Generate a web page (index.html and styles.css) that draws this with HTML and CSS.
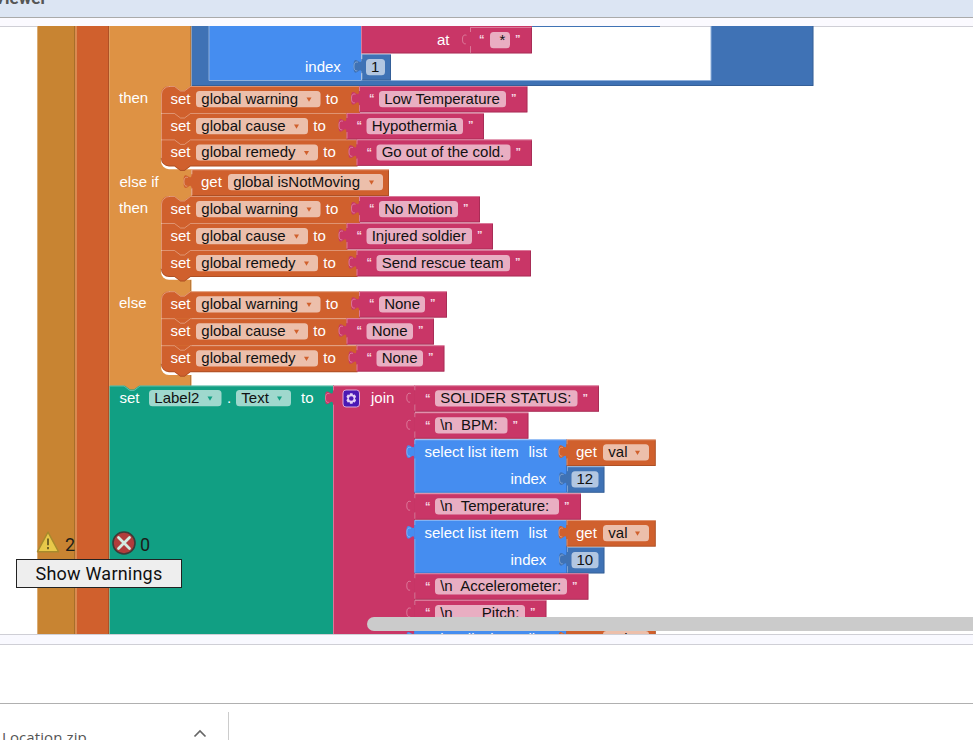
FILE: index.html
```html
<!DOCTYPE html>
<html lang="en">
<head>
<meta charset="utf-8">
<title>Viewer</title>
<link rel="stylesheet" href="styles.css">
</head>
<body>
<header class="viewer-header"><span class="viewer-title">Viewer</span></header>
<main class="workspace">
  <svg class="canvas" viewBox="0 26 973 608" width="973" height="608" id="canvas"></svg>
  <div class="warnings">
    <div class="counts">
      <svg class="warn-icon" viewBox="0 0 24 22" width="24" height="22"><path d="M12 1.2 22.5 20.7H1.5Z" fill="#e8c84a" stroke="#a88a2c" stroke-width="1.4" stroke-linejoin="round"/><path d="M12 7.5v6.8M12 16v2.3" stroke="#6b5a20" stroke-width="1.8"/></svg>
      <span class="count">2</span>
      <svg class="error-icon" viewBox="0 0 24 24" width="24" height="24"><circle cx="12" cy="12" r="11" fill="#b13c3c" stroke="#3c3a38" stroke-width="1.6"/><path d="m6.5 6.500 11 11M17.500 6.500l-11 11" stroke="#d4ebe2" stroke-width="2.800" stroke-linecap="round"/></svg>
      <span class="count">0</span>
    </div>
    <button class="toggle">Show Warnings</button>
  </div>
  <div class="scrollbar"></div>
</main>
<div class="gutter"></div>
<section class="panel"></section>
<footer class="downloads">
  <div class="download">
    <span>Location.zip</span>
    <svg class="chevron" viewBox="0 0 14 9" width="14" height="9"><path d="m1.500 7.500 5.500-5.500 5.500 5.500" fill="none" stroke="#666" stroke-width="1.700"/></svg>
  </div>
</footer>
<script src="blocks.js"></script>
</body>
</html>
```
FILE: styles.css
```css
* { box-sizing: border-box; }
body { margin: 0; height: 740px; overflow: hidden; background: #fff; display: flex; flex-direction: column; font-family: Roboto, sans-serif; }
.viewer-header { flex: 0 0 26px; display: flex; align-items: flex-start; overflow: hidden; background: linear-gradient(#dce5f3 0 17px, #aaa 17px 18px, #fbfaff 18px 26px); }
.viewer-title { margin: -16px 0 0 -6px; font-size: 17px; line-height: 28px; font-weight: 700; color: #555; }
.workspace { flex: 0 0 608px; position: relative; overflow: hidden; }
.canvas { display: block; }
.canvas text { font: 15px "Liberation Sans", sans-serif; fill: #fff; white-space: pre; }
.canvas text.value { fill: #111; }
.canvas text.quote { font-size: 11px; font-weight: 700; fill: #f6dbe5; }
.edge-light { fill: none; stroke: #fff; stroke-opacity: .33; }
.edge-dark { fill: none; stroke: #000; stroke-opacity: .16; }
.pill { fill: #fff; fill-opacity: .6; }
.warnings { position: absolute; left: 16px; top: 504px; width: 166px; color: #1c1c18; }
.counts { display: flex; align-items: flex-start; height: 29px; padding-left: 20px; font-size: 18px; line-height: 29px; }
.count { width: 12px; margin-left: 5px; }
.warn-icon { margin-top: 1px; }
.error-icon { margin-left: 35px; margin-right: -1px; margin-top: 1px; }
.toggle { display: block; width: 166px; height: 29px; padding: 0; border: 1.500px solid #222; border-radius: 0; background: #eee; color: #111; font: 18px/27px Roboto, sans-serif; letter-spacing: .22px; }
.scrollbar { position: absolute; left: 367px; right: -10px; top: 591px; height: 14px; border-radius: 7px; background: #cbcbcb; }
.gutter { flex: 0 0 11px; background: #f9f9ff; border-top: 1px solid #cfcfd6; border-bottom: 1px solid #cfcfd6; }
.panel { flex: 0 0 59px; border-bottom: 1px solid #b0b0b0; }
.downloads { flex: 1; padding-top: 8px; overflow: hidden; }
.download { display: flex; align-items: flex-start; justify-content: space-between; width: 229px; height: 40px; padding: 14px 21px 0 2px; border-right: 1px solid #ccc; color: #555; font: 15px/22px "Open Sans", sans-serif; letter-spacing: .1px; }
.chevron { margin-top: 3px; }
```
FILE: blocks.js
```js
const C = {
  event: '#c88432', proc: '#d0602d', control: '#de9244', variable: '#d0602d',
  text: '#c93667', math: '#3f72b5', list: '#458df0', component: '#119f83'
};
let out = '';
const rect = (x, y, w, h, fill) => { out += `<rect x="${x}" y="${y}" width="${w}" height="${h}" fill="${fill}"/>`; };
const edge = (d, kind) => { out += `<path class="edge-${kind}" d="${d}"/>`; };
const label = (x, y, s, cls = '') => { out += `<text class="${cls}" x="${x}" y="${y}">${s}</text>`; };

// Puzzle tab on the left side of a value block
function tab(x, y, fill) {
  out += `<path d="M${x + .5} ${y + 5}h-.5c0 9.500-8-7.500-8 7.300s8-2.300 8 7h.5z" fill="${fill}"/>`;
  edge(`M${x - 3.5} ${y + 8.2}c-2.200-.6-4 0-4 4.100 0 4 1.500 4.800 3.300 4.500`, 'light');
}
// Rectangular value block
function block(x, y, w, h, fill) {
  rect(x, y, w, h, fill);
  edge(`M${x + .5} ${y + h - 1}V${y + 19}M${x + .5} ${y + 5}V${y + .5}H${x + w}`, 'light');
  edge(`M${x + 1} ${y + h - .5}H${x + w - .5}V${y + 1}`, 'dark');
  tab(x, y, fill);
}
function pill(x, y, w) { out += `<rect class="pill" x="${x}" y="${y}" width="${w}" height="16.200" rx="3.500"/>`; }
function dropdown(x, base, w, s, fill) {
  pill(x, base - 13, w);
  label(x + 5.3, base, s, 'value');
  const a = x + w - 11.5;
  out += `<path d="M${a - 2.5} ${base - 6.500}h5l-2.500 4.300z" fill="${fill}"/>`;
}
function text(x, y, s, pw, width, bleed = 0) {
  const base = y + 18;
  block(x - bleed, y, width + bleed, 26.5, C.text);
  label(x + 10, base - 1.8, '“', 'quote');
  pill(x + 20, base - 13, pw);
  label(x + 25.2, base, s, 'value');
  label(x + 20 + pw + 5, base - 1.8, '”', 'quote');
}
function number(x, y, s, w) {
  block(x, y, w, 26.5, C.math);
  pill(x + 4.5, y + 5, w - 10.5);
  label(x + 9.5, y + 18, s, 'value');
}
// Variable setter; the last one of a stack has a rounded foot
function setter(y, name, pw, right, first, last) {
  const x = 161, h = 27, b = y + h, start = last ? b - 8 : b;
  const tl = first ? `M${x} ${start}V${y + 8}a8 8 0 0 1 8-8` : `M${x} ${start}V${y}`;
  const top = `${tl}H${x + 13.5}l6 4.500h4l6-4.500H${right}`;
  const foot = last ? `H${x + 29.5}l-6 4.500h-4l-6-4.500H${x + 8}a8 8 0 0 1-8-8` : `H${x}`;
  out += `<path d="${top}V${b}${foot}z" fill="${C.variable}"/>`;
  edge(`M${x + .5} ${start}V${y + (first ? 8 : 0)}${first ? 'a8 8 0 0 1 8-7.500' : ''}M${x + (first ? 8 : 0)} ${y + .5}H${x + 13.5}l6 4.500h4l6-4.500H${right}`, 'light');
  if (last) edge(`M${right} ${b - .5}${foot}`, 'dark');
  label(170.5, y + 18, 'set');
  dropdown(196, y + 18, pw, name, C.variable);
  label(196 + pw + 5.3, y + 18, 'to');
}
function stack(ys, values) {
  const rows = [['global warning', 124.5, 359], ['global cause', 112, 346.5], ['global remedy', 122, 356.5]];
  const end = ys[2] + 29.8;
  out += `<path d="M161 ${ys[2] + 12}H192V${end}H169a8 8 0 0 1-8-8z" fill="#fff"/>`;
  rect(170, ys[0], 22, 8, C.control);
  rect(170, ys[1], 22, 8, C.variable);
  rect(170, ys[2], 22, 8, C.variable);
  [0, 1, 2].forEach(i => setter(ys[i], rows[i][0], rows[i][1], rows[i][2] + 1, i === 0, i === 2));
  [0, 1, 2].forEach(i => text(rows[i][2], ys[i], values[i][0], values[i][1], values[i][2]));
}
function select(y, index) {
  block(414.3, y, 152.7, 53.5, C.list);
  label(424.5, y + 18, 'select list item');
  label(528.5, y + 18, 'list');
  block(566.5, y, 89.300, 26.700, C.variable);
  label(576, y + 18, 'get');
  dropdown(603, y + 18, 46, 'val', C.variable);
  if (!index) return;
  label(510.5, y + 45, 'index');
  number(567, y + 27, index, 37.5);
}

// Top border of the canvas and the enclosing containers
rect(0, 26, 973, 1, '#cfcfd6');
rect(37, 26, 39, 610, C.event);
rect(75, 26, 2, 610, '#d98a50');
rect(77, 26, 32, 610, C.proc);
rect(109, 26, 1, 360, '#e0a060');
rect(109, 386, 1, 250, '#7fae8c');
edge('M37.500 26V636', 'light');
edge('M74.500 26V636M108.500 26V636', 'dark');
rect(110, 26, 81.5, 360, C.control);
edge('M190.500 26V86M190.500 280V291M190.500 375V386', 'dark');

// Comparison with its list item
rect(191.5, 26, 622, 60, C.math);
rect(209, 27, 502, 54, '#fff');
rect(660, 26, 51, 1, '#cfcfd6');
edge('M813 26V85.500H192', 'dark');
rect(209, 26, 152, 55, C.list);
out += '<path d="M209 26V80.500H711V26" fill="none" stroke="#8fb0dc"/>';
rect(361, 26, 171, 27.500, C.text);
edge('M361.500 26V53M470.500 53V46M470.500 32V27.500H532', 'light');
edge('M362 53H531.500V27', 'dark');
tab(470, 27, C.text);
label(437, 45, 'at');
label(479, 43.200, '“', 'quote');
pill(490, 32, 20);
label(499.5, 45, '*', 'value');
label(515, 43.200, '”', 'quote');
label(305, 72, 'index');
number(361.500, 54, '1', 29.500);

// if / else-if / else branches
label(119, 103, 'then');
stack([86, 113, 139.4], [['Low Temperature', 127, 168.5], ['Hypothermia', 96.5, 137.500], ['Go out of the cold.', 134, 175.500]]);
label(119.500, 187, 'else if');
block(191.500, 169.300, 197.500, 26.700, C.variable);
label(201, 187, 'get');
dropdown(228, 187, 155, 'global isNotMoving', C.variable);
label(119, 213, 'then');
stack([196, 223, 250], [['No Motion', 79, 121], ['Injured soldier', 105.500, 146.500], ['Send rescue team', 133.500, 174.500]]);
label(119, 308, 'else');
stack([291.200, 318.200, 345.200], [['None', 46, 88], ['None', 46.500, 87.500], ['None', 46.500, 88]]);

// Label2.Text setter
rect(110, 385.500, 224, 250, C.component);
out += `<path d="M124 385l6 4.500h4l6-4.500z" fill="${C.control}"/>`;
edge('M110 386H124l6 4.500h4l6-4.500H333', 'light');
label(119.500, 403, 'set');
dropdown(149, 403, 72.500, 'Label2', C.component);
label(227, 403, '.');
dropdown(236, 403, 55, 'Text', C.component);
label(301, 403, 'to');

// join with its mutator gear
block(333, 385.500, 82, 260, C.text);
out += '<rect x="343" y="390" width="16.500" height="17" rx="3" fill="#4a19b5" stroke="#dcaad8"/>' +
  '<path d="M350 393.300h2.500l.5 1.700 1.800-.4 1.300 2.200-1.200 1.700 1.200 1.700-1.300 2.200-1.800-.4-.5 1.700H350l-.5-1.700-1.800.4-1.300-2.200 1.200-1.700-1.200-1.700 1.300-2.200 1.800.4z" fill="#e3cff5"/><circle cx="351.250" cy="398.500" r="2.300" fill="#4a19b5"/>';
label(371, 403, 'join');
text(415, 385.300, 'SOLIDER STATUS:', 142.500, 184, .7);
text(415, 412.300, '\\n  BPM: ', 72.500, 113.500, .7);
select(439.300, '12');
text(415, 493.300, '\\n  Temperature: ', 124, 166, .7);
select(520, '10');
text(415, 573.300, '\\n  Accelerometer:', 132, 173.500, .7);
text(415, 600, '\\n       Pitch:', 90, 131.500, .7);
select(626, '');

document.getElementById('canvas').innerHTML = out;
```
